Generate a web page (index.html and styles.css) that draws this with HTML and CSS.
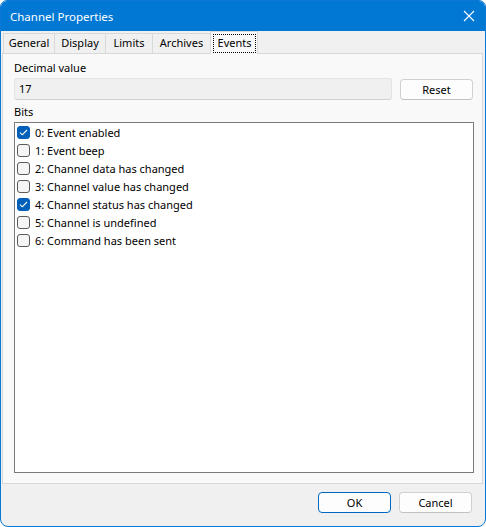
FILE: index.html
```html
<!DOCTYPE html>
<html>
<head>
<meta charset="utf-8">
<link rel="stylesheet" href="styles.css">
</head>
<body>
<div class="window">
  <div class="titlebar">
    <span class="title">Channel Properties</span>
    <svg class="close" width="12" height="12" viewBox="0 0 12 12"><path d="M1 1L11 11M11 1L1 11" stroke="#fff" stroke-width="1.1" fill="none"/></svg>
  </div>
  <div class="tabs">
    <div class="tab t-general">General</div>
    <div class="tab t-display">Display</div>
    <div class="tab t-limits">Limits</div>
    <div class="tab t-archives">Archives</div>
    <div class="tab selected t-events"><span class="focus">Events</span></div>
  </div>
  <div class="panel">
    <div class="label">Decimal value</div>
    <div class="row">
      <div class="input">17</div>
      <button class="btn">Reset</button>
    </div>
    <div class="label bits">Bits</div>
    <div class="list">
      <div class="item"><span class="cb checked"><svg width="9" height="7" viewBox="0 0 9 7"><path d="M1 3.6L3.3 5.8L8 1" stroke="#fff" stroke-width="1.1" fill="none"/></svg></span>0: Event enabled</div>
      <div class="item"><span class="cb"></span>1: Event beep</div>
      <div class="item"><span class="cb"></span>2: Channel data has changed</div>
      <div class="item"><span class="cb"></span>3: Channel value has changed</div>
      <div class="item"><span class="cb checked"><svg width="9" height="7" viewBox="0 0 9 7"><path d="M1 3.6L3.3 5.8L8 1" stroke="#fff" stroke-width="1.1" fill="none"/></svg></span>4: Channel status has changed</div>
      <div class="item"><span class="cb"></span>5: Channel is undefined</div>
      <div class="item"><span class="cb"></span>6: Command has been sent</div>
    </div>
  </div>
  <div class="footer">
    <button class="btn default">OK</button>
    <button class="btn">Cancel</button>
  </div>
</div>
</body>
</html>
```
FILE: styles.css
```css
* { box-sizing: border-box; }
html, body { margin: 0; padding: 0; background: #fff; }
body {
  font-family: "Noto Sans", "Open Sans", sans-serif;
  font-size: 11px;
  color: #000;
}
.window {
  width: 486px;
  height: 527px;
  border: 1px solid #0a78d4;
  border-radius: 7px 7px 8px 8px;
  background: #f0f0f0;
  overflow: hidden;
  display: flex;
  flex-direction: column;
}
.titlebar {
  height: 30px;
  background: #0078d4;
  display: flex;
  align-items: center;
  justify-content: space-between;
  padding: 0 10px 0 9px;
  flex: none;
}
.title { color: #fff; font-size: 11.5px; }
.tabs {
  display: flex;
  align-items: flex-end;
  height: 22px;
  padding-left: 2px;
  flex: none;
  position: relative;
  z-index: 1;
}
.tab {
  height: 20px;
  line-height: 18px;
  padding: 0 4px;
  border: 1px solid #d9d9d9;
  border-bottom: none;
  background: #f0f0f0;
  margin-left: -1px;
  text-align: center;
}
.t-general { margin-left: 0; width: 52px; }
.t-display { width: 52px; }
.t-limits { width: 48px; }
.t-archives { width: 59px; }
.tab.selected {
  height: 23px;
  width: 48px;
  background: #f9f9f9;
  margin-bottom: -1px;
  padding: 2px 1px 0 2px;
  display: flex;
  align-items: flex-start;
}
.focus {
  display: block;
  width: 100%;
  height: 19px;
  border: 1px dotted #000;
  line-height: 16px;
}
.panel {
  flex: none;
  height: 431px;
  margin: 0 2px 0 1px;
  background: #f9f9f9;
  border: 1px solid #d9d9d9;
  padding: 6px 9px 0 11px;
  display: flex;
  flex-direction: column;
}
.label { line-height: 16px; height: 16px; }
.row {
  display: flex;
  align-items: center;
  gap: 8px;
  margin-top: 2px;
}
.input {
  width: 378px;
  height: 22px;
  background: #f0f0f0;
  border: 1px solid #e3e3e3;
  border-bottom-color: #d0d0d0;
  border-radius: 3px;
  padding-left: 4px;
  line-height: 20px;
}
.btn {
  font-family: inherit;
  font-size: 11px;
  color: #000;
  width: 73px;
  height: 21px;
  background: #fdfdfd;
  border: 1px solid #d0d0d0;
  border-bottom-color: #c2c2c2;
  border-radius: 4px;
  padding: 0;
  line-height: 19px;
}
.btn.default {
  border: 1px solid #0067c0;
  background: #fdfdfd;
}
.bits { margin-top: 4px; }
.list {
  margin-top: 2px;
  width: 460px;
  height: 351px;
  background: #fff;
  border: 1px solid #7a7a7a;
  padding: 0 0 0 2px;
}
.item {
  height: 18px;
  display: flex;
  align-items: center;
  gap: 5px;
}
.cb {
  width: 13px;
  height: 13px;
  border: 1px solid #5a5a5a;
  border-radius: 3px;
  background: #f5f5f5;
  display: flex;
  align-items: center;
  justify-content: center;
  flex: none;
}
.cb.checked {
  background: #005fb8;
  border-color: #005fb8;
}
.footer {
  flex: 1;
  display: flex;
  justify-content: flex-end;
  align-items: flex-start;
  gap: 8px;
  padding: 8px 13px 0 0;
}
```
